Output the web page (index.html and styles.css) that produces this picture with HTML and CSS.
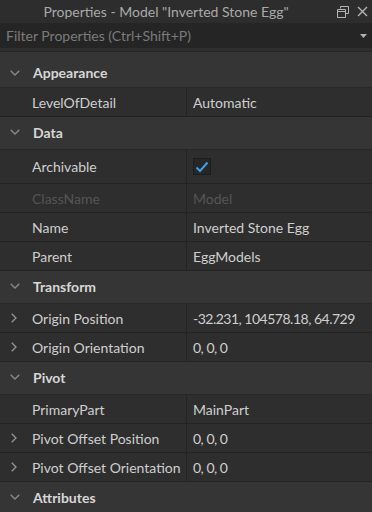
FILE: index.html
```html
<!DOCTYPE html>
<html>
<head>
<meta charset="utf-8">
<link rel="stylesheet" href="styles.css">
</head>
<body>
<div class="window">
  <div class="titlebar">
    <div class="title">Properties - Model "Inverted Stone Egg"</div>
    <div class="title-icons">
      <svg class="ico" width="12" height="12" viewBox="0 0 12 12"><path d="M3.5 2.5 V0.5 H11.5 V7.5 H8.5 M0.5 3.5 H8.5 V11.5 H0.5 Z M0.5 5.5 H8.5" fill="none" stroke="#b4b4b4" stroke-width="1"/></svg>
      <svg class="ico" width="11" height="11" viewBox="0 0 11 11"><path d="M1 1 L10 10 M10 1 L1 10" stroke="#b4b4b4" stroke-width="1.4"/></svg>
    </div>
  </div>
  <div class="filter">
    <span class="filter-text">Filter Properties (Ctrl+Shift+P)</span>
    <svg width="7" height="4" viewBox="0 0 7 4"><path d="M0 0 H7 L3.5 4 Z" fill="#b0b0b0"/></svg>
  </div>
  <div class="list">
    <div class="cat cat-first"><svg class="chev" width="10" height="6" viewBox="0 0 10 6"><path d="M0.7 0.7 L5 5 L9.3 0.7" fill="none" stroke="#8a8a8a" stroke-width="1.3"/></svg><span>Appearance</span></div>
    <div class="prop"><div class="name"><span class="exp"></span>LevelOfDetail</div><div class="val">Automatic</div></div>

    <div class="cat"><svg class="chev" width="10" height="6" viewBox="0 0 10 6"><path d="M0.7 0.7 L5 5 L9.3 0.7" fill="none" stroke="#8a8a8a" stroke-width="1.3"/></svg><span>Data</span></div>
    <div class="prop prop-tall"><div class="name"><span class="exp"></span>Archivable</div><div class="val"><span class="check"><svg width="14" height="12" viewBox="0 0 14 12"><path d="M1.5 6.5 L5 10 L12.5 1.5" fill="none" stroke="#3aa0ea" stroke-width="2"/></svg></span></div></div>
    <div class="prop disabled"><div class="name"><span class="exp"></span>ClassName</div><div class="val">Model</div></div>
    <div class="prop"><div class="name"><span class="exp"></span>Name</div><div class="val">Inverted Stone Egg</div></div>
    <div class="prop"><div class="name"><span class="exp"></span>Parent</div><div class="val">EggModels</div></div>

    <div class="cat"><svg class="chev" width="10" height="6" viewBox="0 0 10 6"><path d="M0.7 0.7 L5 5 L9.3 0.7" fill="none" stroke="#8a8a8a" stroke-width="1.3"/></svg><span>Transform</span></div>
    <div class="prop"><div class="name"><span class="exp"><svg width="6" height="10" viewBox="0 0 6 10"><path d="M0.7 0.7 L5 5 L0.7 9.3" fill="none" stroke="#959595" stroke-width="1.3"/></svg></span>Origin Position</div><div class="val num">-32.231, 104578.18, 64.729</div></div>
    <div class="prop"><div class="name"><span class="exp"><svg width="6" height="10" viewBox="0 0 6 10"><path d="M0.7 0.7 L5 5 L0.7 9.3" fill="none" stroke="#959595" stroke-width="1.3"/></svg></span>Origin Orientation</div><div class="val num">0, 0, 0</div></div>

    <div class="cat"><svg class="chev" width="10" height="6" viewBox="0 0 10 6"><path d="M0.7 0.7 L5 5 L9.3 0.7" fill="none" stroke="#8a8a8a" stroke-width="1.3"/></svg><span>Pivot</span></div>
    <div class="prop"><div class="name"><span class="exp"></span>PrimaryPart</div><div class="val">MainPart</div></div>
    <div class="prop"><div class="name"><span class="exp"><svg width="6" height="10" viewBox="0 0 6 10"><path d="M0.7 0.7 L5 5 L0.7 9.3" fill="none" stroke="#959595" stroke-width="1.3"/></svg></span>Pivot Offset Position</div><div class="val num">0, 0, 0</div></div>
    <div class="prop"><div class="name"><span class="exp"><svg width="6" height="10" viewBox="0 0 6 10"><path d="M0.7 0.7 L5 5 L0.7 9.3" fill="none" stroke="#959595" stroke-width="1.3"/></svg></span>Pivot Offset Orientation</div><div class="val num">0, 0, 0</div></div>

    <div class="cat"><svg class="chev" width="10" height="6" viewBox="0 0 10 6"><path d="M0.7 0.7 L5 5 L9.3 0.7" fill="none" stroke="#8a8a8a" stroke-width="1.3"/></svg><span>Attributes</span></div>
  </div>
</div>
</body>
</html>
```
FILE: styles.css
```css
* { box-sizing: border-box; }
html, body { margin: 0; padding: 0; background: #2e2e2e; }
body { width: 372px; height: 512px; overflow: hidden; font-family: Lato, "Noto Sans", sans-serif; }

.window { display: flex; flex-direction: column; width: 372px; height: 512px; background: #2e2e2e; }
.window > * { flex-shrink: 0; }

.titlebar { height: 23px; display: flex; align-items: center; background: #2d2d2d; }
.title { flex: 1; text-align: center; color: #a9a9a9; font-size: 14px; }
.title-icons { width: 40px; display: flex; align-items: center; gap: 8px; padding-right: 4px; justify-content: flex-end; }
.ico { display: block; }

.filter { height: 25px; display: flex; align-items: center; justify-content: space-between; background: #252525; padding: 0 5px 0 6px; }
.filter-text { color: #7b7b7b; font-size: 14px; }

.list { border-top: 3px solid #2e2e2e; }

.cat { height: 33px; display: flex; align-items: center; padding-bottom: 2px; background: #353535; border-bottom: 1px solid #272727; color: #d7d7d7; font-weight: bold; font-size: 14px; }
.cat-first { height: 37px; padding-top: 6px; padding-bottom: 0; border-top: 1px solid #272727; }
.chev { margin: 0 13px 0 10px; }

.prop { height: 29px; display: flex; background: #2e2e2e; border-bottom: 1px solid #232323; color: #cfcfcf; font-size: 14px; }
.prop-tall { height: 34px; }
.name { width: 187px; display: flex; align-items: center; border-right: 1px solid #232323; }
.exp { width: 32px; display: flex; justify-content: flex-start; padding-left: 11px; }
.exp svg { display: block; }
.val { flex: 1; display: flex; align-items: center; padding-left: 6px; }
.num { letter-spacing: -0.5px; }
.disabled { color: #555555; }

.check { width: 18px; height: 17px; background: #262626; border: 1px solid #1c1c1c; display: flex; align-items: center; justify-content: center; }
```
